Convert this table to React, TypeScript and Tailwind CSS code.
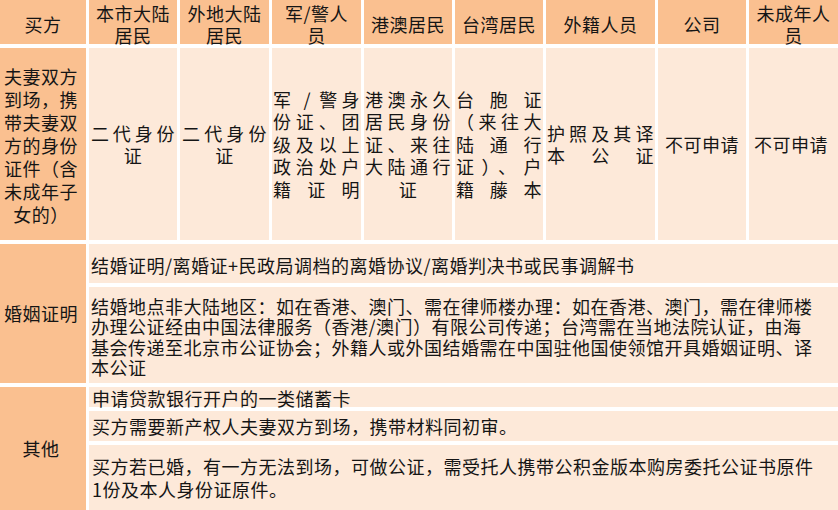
import React from 'react';

const head = 'bg-[#fac090]';
const body = 'bg-[#fde9d9]';

// each line is its own block; justified lines spread to the cell width
function Lines({ lines, lastCenter = false }: { lines: string[]; lastCenter?: boolean }) {
  return (
    <div className="w-full">
      {lines.map((l, i) => {
        const center = lastCenter && i === lines.length - 1;
        return (
          <div
            key={i}
            className={center ? 'text-center' : 'text-justify [text-align-last:justify]'}
          >
            {l}
          </div>
        );
      })}
    </div>
  );
}

function HeadCell({ lines }: { lines: string[] }) {
  return (
    <div className={`${head} flex items-center justify-center pt-[4px] text-center leading-[22px]`}>
      <div>
        {lines.map((l, i) => (
          <div key={i}>{l}</div>
        ))}
      </div>
    </div>
  );
}

export default function App() {
  const headers = [
    ['买方'],
    ['本市大陆', '居民'],
    ['外地大陆', '居民'],
    ['军/警人', '员'],
    ['港澳居民'],
    ['台湾居民'],
    ['外籍人员'],
    ['公司'],
    ['未成年人', '员'],
  ];

  return (
    <div className="h-[510px] w-[838px] overflow-hidden bg-white font-['Noto_Sans_CJK_SC',sans-serif] text-[18px] tracking-[0.5px] text-[#151515]">
      <div className="grid h-full grid-cols-[86px_88px_89px_89px_88px_88px_109px_88px_89px] grid-rows-[44px_192px_139px_1fr] gap-x-[3px] gap-y-[4px]">
        {headers.map((h, i) => (
          <HeadCell key={i} lines={h} />
        ))}

        {/* identity documents row */}
        <div className={`${head} flex items-center justify-center pt-[3px] pr-[4px] leading-[23px]`}>
          <div className="text-center">
            <div>夫妻双方</div>
            <div>到场，携</div>
            <div>带夫妻双</div>
            <div>方的身份</div>
            <div>证件（含</div>
            <div>未成年子</div>
            <div>女的）</div>
          </div>
        </div>
        <div className={`${body} flex items-center px-[2px] leading-[22px]`}>
          <Lines lines={['二代身份', '证']} lastCenter />
        </div>
        <div className={`${body} flex items-center px-[2px] leading-[22px]`}>
          <Lines lines={['二代身份', '证']} lastCenter />
        </div>
        <div className={`${body} flex items-center px-[1px] leading-[22.5px]`}>
          <Lines lines={['军 / 警身', '份证、团', '级及以上', '政治处户', '籍证明']} />
        </div>
        <div className={`${body} flex items-center px-[1px] leading-[22.5px]`}>
          <Lines lines={['港澳永久', '居民身份', '证、来往', '大陆通行', '证']} lastCenter />
        </div>
        <div className={`${body} flex items-center px-[1px] leading-[22.5px]`}>
          <Lines lines={['台胞证', '（来往大', '陆通行', '证）、户', '籍藤本']} />
        </div>
        <div className={`${body} flex items-center px-[1px] leading-[22px]`}>
          <Lines lines={['护照及其译', '本公证']} />
        </div>
        <div className={`${body} flex items-center justify-center`}>不可申请</div>
        <div className={`${body} flex items-center justify-center pr-[5px]`}>不可申请</div>

        {/* marriage certificate */}
        <div className={`${head} flex items-center justify-center pr-[4px]`}>婚姻证明</div>
        <div className="col-span-8 flex flex-col gap-y-[4px]">
          <div className={`${body} flex h-[39px] items-center px-[2px] pt-[3px]`}>
            结婚证明/离婚证+民政局调档的离婚协议/离婚判决书或民事调解书
          </div>
          <div className={`${body} flex flex-1 items-center whitespace-nowrap px-[2px] pt-[3px] leading-[20.5px]`}>
            <div>
              <div>结婚地点非大陆地区：如在香港、澳门、需在律师楼办理：如在香港、澳门，需在律师楼</div>
              <div>办理公证经由中国法律服务（香港/澳门）有限公司传递；台湾需在当地法院认证，由海</div>
              <div>基会传递至北京市公证协会；外籍人或外国结婚需在中国驻他国使领馆开具婚姻证明、译</div>
              <div>本公证</div>
            </div>
          </div>
        </div>

        {/* other */}
        <div className={`${head} flex items-center justify-center pr-[4px]`}>其他</div>
        <div className="col-span-8 flex flex-col gap-y-[4px]">
          <div className={`${body} flex h-[20px] items-center px-[3px] pt-[2px] leading-[20px]`}>
            申请贷款银行开户的一类储蓄卡
          </div>
          <div className={`${body} flex h-[30px] items-center px-[3px] leading-[20px]`}>
            买方需要新产权人夫妻双方到场，携带材料同初审。
          </div>
          <div className={`${body} flex flex-1 items-center whitespace-nowrap px-[3px] leading-[23px]`}>
            <div>
              <div>买方若已婚，有一方无法到场，可做公证，需受托人携带公积金版本购房委托公证书原件</div>
              <div>1份及本人身份证原件。</div>
            </div>
          </div>
        </div>
      </div>
    </div>
  );
}
